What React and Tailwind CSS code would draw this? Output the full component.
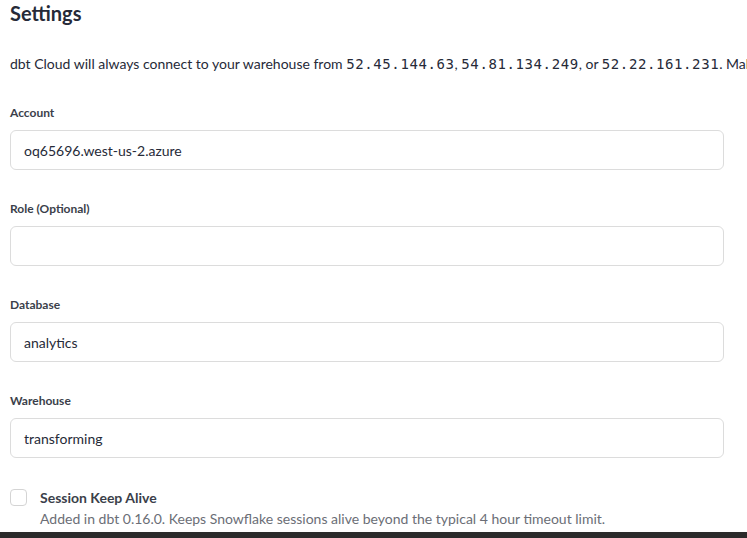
const fields = [
  { label: 'Account', value: 'oq65696.west-us-2.azure' },
  { label: 'Role (Optional)', value: '' },
  { label: 'Database', value: 'analytics' },
  { label: 'Warehouse', value: 'transforming' },
];

const mono = "font-['DejaVu_Sans_Mono',monospace] text-[14px] tracking-[0.6px] text-[#262a38]";

export default function App() {
  return (
    <div className="w-[747px] h-[538px] overflow-hidden bg-white flex flex-col font-['Lato',sans-serif] text-[#262a38]">
      <div className="flex-1 pl-[10px] pr-[23px] overflow-hidden">
        <h1 className="text-[20px] font-bold leading-[24px] pt-[1px] text-[#262a38]">Settings</h1>
        <p className="mt-[29px] text-[14px] leading-[20px] whitespace-nowrap">
          dbt Cloud will always connect to your warehouse from <span className={mono}>52.45.144.63</span>, <span className={mono}>54.81.134.249</span>, or <span className={mono}>52.22.161.231</span>. Make sure to allow inbound traffic from these IPs in your firewall.
        </p>
        <div className="mt-[31px] flex flex-col gap-[31px]">
          {fields.map(f => (
            <div key={f.label}>
              <label className="block text-[12px] font-bold leading-[16px] text-[#3b3f4a]">{f.label}</label>
              <div className="mt-[9px] h-[40px] border border-[#dcdcdc] rounded-[6px] flex items-center px-[13px] text-[14px]">
                {f.value}
              </div>
            </div>
          ))}
        </div>
        <div className="mt-[31px] flex gap-[13px]">
          <div className="w-[17px] h-[17px] border border-[#d4d4d4] rounded-[4px] bg-white shrink-0"></div>
          <div>
            <div className="text-[14px] font-bold leading-[18px] text-[#3b3f4a]">Session Keep Alive</div>
            <div className="mt-[3px] text-[14px] leading-[18px] text-[#6b6e76]">Added in dbt 0.16.0. Keeps Snowflake sessions alive beyond the typical 4 hour timeout limit.</div>
          </div>
        </div>
      </div>
      <div className="h-[6px] bg-[#2b2b2b]"></div>
    </div>
  );
}
